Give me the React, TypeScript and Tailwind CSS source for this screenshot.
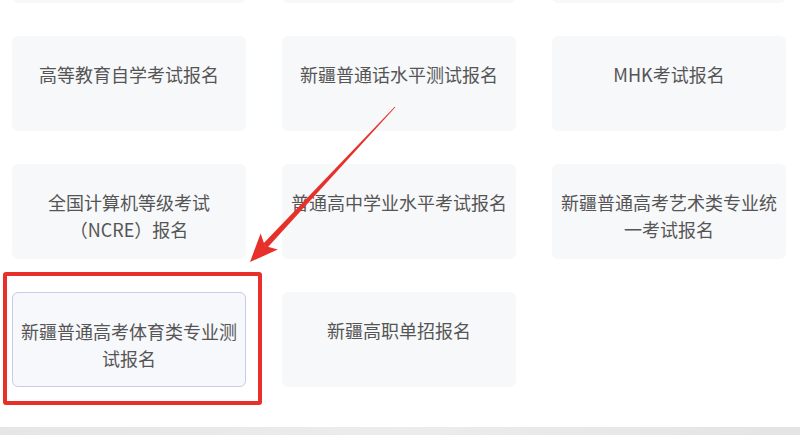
import * as React from 'react';

const rows: string[][] = [
  ['', '', ''],
  ['高等教育自学考试报名', '新疆普通话水平测试报名', 'MHK考试报名'],
  ['全国计算机等级考试（NCRE）报名', '普通高中学业水平考试报名', '新疆普通高考艺术类专业统一考试报名'],
  ['新疆普通高考体育类专业测试报名', '新疆高职单招报名'],
];

const Card: React.FC<{ label: string; selected?: boolean }> = ({ label, selected }) => (
  <div
    className={`h-[95px] rounded-md px-[8px] pt-[25px] text-center text-[18px] leading-[27px] text-[#555] ${
      selected ? 'border border-[#c9cbe8] bg-[#f7f8fc]' : 'bg-[#f7f8fa]'
    }`}
  >
    {label}
  </div>
);

const App: React.FC = () => {
  return (
    <div
      className="relative h-[435px] w-[800px] overflow-hidden bg-white"
      style={{ fontFamily: '"Noto Sans CJK SC", "Noto Sans", sans-serif' }}
    >
      <div className="-mt-[92px] grid grid-cols-[234px_234px_234px] gap-x-[36px] gap-y-[33px] pl-[12px]">
        {rows.map((row, r) =>
          row.map((label, c) => {
            const selected = r === 3 && c === 0;
            return (
              <div key={`${r}-${c}`} className="relative">
                <Card label={label} selected={selected} />
                {selected && (
                  <div className="absolute -left-[9px] -top-[20px] -right-[16px] -bottom-[18px] rounded-[3px] border-[4px] border-[#e8302a]" />
                )}
              </div>
            );
          })
        )}
      </div>

      <div className="mt-[40px] h-[10px] bg-gradient-to-r from-[#e6e6e6] via-[#ececec] to-[#e4e4e4]" />

      {/* annotation arrow */}
      <svg className="pointer-events-none absolute inset-0" width="800" height="435" viewBox="0 0 800 435">
        <polygon points="395.3,107.3 394.7,106.7 262.9,244.0 267.1,248.0" fill="#e8302a" />
        <polygon points="250,262 260.6,233.4 265,245.9 277.8,249.6" fill="#e8302a" />
      </svg>
    </div>
  );
};

export default App;
